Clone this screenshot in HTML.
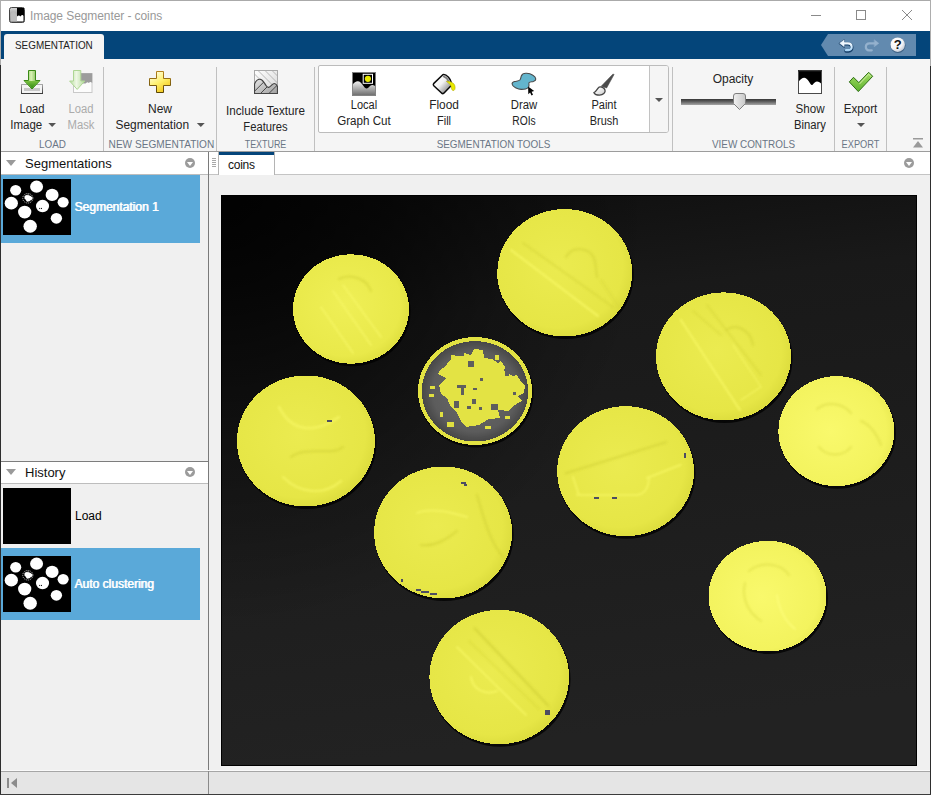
<!DOCTYPE html>
<html lang="en">
<head>
<meta charset="utf-8">
<title>Image Segmenter - coins</title>
<style>
html,body{margin:0;padding:0;}
body{width:931px;height:795px;overflow:hidden;background:#f0f0f0;position:relative;font-family:"Liberation Sans",sans-serif;font-size:12px;color:#000;}
.abs{position:absolute;}
#win{position:absolute;left:0;top:0;width:931px;height:795px;overflow:hidden;background:#f0f0f0;}
/* title bar */
#title{left:0;top:0;width:931px;height:31px;background:#fff;}
#title .txt{left:30px;top:8px;font-size:12px;line-height:16px;color:#999;white-space:nowrap;letter-spacing:-0.080px;}
/* blue band */
#band{left:0;top:31px;width:931px;height:28px;background:#04457a;}
#tab{left:4px;top:34px;width:100px;height:25px;background:#f5f5f5;border-radius:3px 3px 0 0;}
#tab span{transform:scaleX(0.9);transform-origin:0 50%;position:absolute;left:11px;top:4px;font-size:11px;line-height:14px;color:#222;white-space:nowrap;}
/* toolstrip */
#strip{left:0;top:59px;width:931px;height:92px;background:#f5f5f5;}
.sep{position:absolute;width:1px;background:#c0c0c0;top:67px;height:84px;}
.seclab{transform:scaleX(0.9);position:absolute;top:137px;height:14px;line-height:14px;font-size:11px;color:#6a7685;text-align:center;white-space:nowrap;}
.btxt{transform:scaleX(0.96);position:absolute;text-align:center;font-size:12px;line-height:16px;color:#242424;white-space:nowrap;}
.dis{color:#ababab;}
.dd{display:inline-block;width:0;height:0;border-left:4px solid transparent;border-right:4px solid transparent;border-top:4px solid #555;vertical-align:middle;margin-left:6px;position:relative;top:-1px;}
/* panels */
.hline{position:absolute;height:1px;}
.vline{position:absolute;width:1px;}
.phead{position:absolute;background:#fff;}
.ptitle{position:absolute;font-size:13px;line-height:16px;color:#111;white-space:nowrap;}
.tri{position:absolute;width:0;height:0;border-left:5px solid transparent;border-right:5px solid transparent;border-top:6px solid #9a9a9a;}
.circ{position:absolute;width:10px;height:10px;border-radius:50%;background:#9b9b9b;}
.circ:after{content:"";position:absolute;left:2px;top:3.500px;width:0;height:0;border-left:3px solid transparent;border-right:3px solid transparent;border-top:4.500px solid #fff;}
.sel{position:absolute;background:#5aa9d9;}
.thumb{position:absolute;width:68px;height:56px;background:#000;overflow:hidden;}
.ilab{position:absolute;font-size:12px;line-height:16px;white-space:nowrap;}
.ilab.b{color:#fff;font-weight:normal;text-shadow:0.8px 0 0 #fff;}
</style>
</head>
<body>
<div id="win">
  <!-- title bar -->
  <div id="title" class="abs">
    <svg class="abs" style="left:9px;top:7px" width="16" height="16" viewBox="0 0 16 16">
      <defs><linearGradient id="ig" x1="0" y1="0" x2="0" y2="1"><stop offset="0" stop-color="#d8d8d8"/><stop offset="1" stop-color="#6e6e6e"/></linearGradient></defs>
      <rect x="0.5" y="0.5" width="15" height="15" rx="2" fill="url(#ig)" stroke="#444"/>
      <rect x="8" y="1" width="7" height="14" fill="#000"/>
      <path d="M1.5 14.5 V8 C2 5.5 3.5 4.5 5 5 C6.5 5.5 7.5 7 8 8.5 V14.5 Z" fill="#bdbdbd"/>
      <path d="M8 14.5 V9.5 C9 8 10.5 8 11.5 9.5 C12.5 7.5 14 7.5 14.5 9 V14.5 Z" fill="#fff"/>
    </svg>
    <div class="abs txt">Image Segmenter - coins</div>
    <div class="abs" style="left:811px;top:15px;width:10px;height:1px;background:#8a8a8a"></div>
    <div class="abs" style="left:856px;top:10px;width:8px;height:8px;border:1px solid #8a8a8a"></div>
    <svg class="abs" style="left:901px;top:9px" width="12" height="12" viewBox="0 0 12 12"><path d="M1 1 L11 11 M11 1 L1 11" stroke="#8a8a8a" stroke-width="1" fill="none"/></svg>
  </div>
  <!-- blue band -->
  <div id="band" class="abs"></div>
  <div id="tab" class="abs"><span>SEGMENTATION</span></div>
  <!-- toolstrip body -->
  <div id="strip" class="abs"></div>
  <!-- ===== TOOLSTRIP CONTENT ===== -->
  <div class="sep" style="left:103px"></div>
  <div class="sep" style="left:216px"></div>
  <div class="sep" style="left:314px"></div>
  <div class="sep" style="left:672px"></div>
  <div class="sep" style="left:834px"></div>
  <div class="sep" style="left:886px"></div>
  <div class="seclab" style="left:2px;width:101px">LOAD</div>
  <div class="seclab" style="left:104px;width:112px;transform:scaleX(0.918)">NEW SEGMENTATION</div>
  <div class="seclab" style="left:217px;width:97px;transform:scaleX(0.81)">TEXTURE</div>
  <div class="seclab" style="left:315px;width:357px">SEGMENTATION TOOLS</div>
  <div class="seclab" style="left:673px;width:161px">VIEW CONTROLS</div>
  <div class="seclab" style="left:835px;width:51px;transform:scaleX(0.84)">EXPORT</div>

  <!-- Load Image -->
  <svg class="abs" style="left:20px;top:69px" width="24" height="26" viewBox="0 0 24 26">
    <defs>
      <linearGradient id="ga" x1="0" y1="0" x2="1" y2="0"><stop offset="0" stop-color="#5fae2e"/><stop offset="0.45" stop-color="#d9f2b4"/><stop offset="1" stop-color="#4c9a1f"/></linearGradient>
      <linearGradient id="gtr" x1="0" y1="0" x2="0" y2="1"><stop offset="0" stop-color="#a8a8a8"/><stop offset="1" stop-color="#3c3c3c"/></linearGradient><linearGradient id="gh" x1="0" y1="0" x2="0" y2="1"><stop offset="0" stop-color="#7cc242"/><stop offset="1" stop-color="#2f8a10"/></linearGradient>
    </defs>
    <rect x="1.5" y="15.5" width="21" height="9" fill="#f4f4f4" stroke="url(#gtr)"/>
    <rect x="4" y="19" width="16" height="3" fill="#c8c8c8"/>
    <path d="M8.5 1.5 H15.500 V11.5 H20 L12 20 L4 11.5 H8.500 Z" fill="url(#ga)" stroke="#3a8a16" stroke-width="1"/>
    <path d="M4.800 12 H19.2 L12 19.400 Z" fill="url(#gh)"/>
  </svg>
  <div class="btxt" style="left:2px;width:60px;top:101px;transform:scaleX(0.936)">Load</div>
  <div class="btxt" style="left:4px;width:58px;top:117px;transform:scaleX(0.958)">Image<span class="dd"></span></div>

  <!-- Load Mask (disabled) -->
  <svg class="abs" style="left:68px;top:69px" width="26" height="26" viewBox="0 0 26 26">
    <defs><linearGradient id="gad" x1="0" y1="0" x2="1" y2="0"><stop offset="0" stop-color="#b9dea0"/><stop offset="0.45" stop-color="#eef8e4"/><stop offset="1" stop-color="#b3d99a"/></linearGradient></defs>
    <rect x="5.500" y="4.500" width="18.500" height="19" fill="#fcfcfc" stroke="#c9c9c9"/>
    <path d="M12 4.200 H24.200 V14 C23 12.500 21.800 12.800 20.800 14 C19.800 12.600 18.600 13 17.600 14.600 L12 14.600 Z" fill="#9c9c9c"/>
    <path d="M5.500 1.500 H12.800 V12 H16.800 L9.200 20.400 L1.600 12 H5.500 Z" fill="url(#gad)" stroke="#aed694" stroke-width="1" stroke-linejoin="round"/>
  </svg>
  <div class="btxt dis" style="left:56px;width:50px;top:101px;transform:scaleX(0.936)">Load</div>
  <div class="btxt dis" style="left:56px;width:50px;top:117px;transform:scaleX(0.94)">Mask</div>

  <!-- New Segmentation -->
  <svg class="abs" style="left:148px;top:70px" width="24" height="24" viewBox="0 0 24 24">
    <defs><linearGradient id="gp" x1="0.2" y1="0" x2="0.8" y2="1"><stop offset="0" stop-color="#ffffe8"/><stop offset="0.5" stop-color="#fff06a"/><stop offset="1" stop-color="#f0c010"/></linearGradient><linearGradient id="gps" x1="0" y1="0" x2="0" y2="1"><stop offset="0" stop-color="#b5831e"/><stop offset="1" stop-color="#5a4606"/></linearGradient></defs>
    <path d="M8.500 1.500 H15.500 V8.500 H22.500 V15.500 H15.500 V22.500 H8.500 V15.500 H1.500 V8.500 H8.500 Z" fill="url(#gp)" stroke="url(#gps)" stroke-width="1" stroke-linejoin="round"/>
  </svg>
  <div class="btxt" style="left:110px;width:100px;top:101px;transform:scaleX(1.0)">New</div>
  <div class="btxt" style="left:110px;width:100px;top:117px;transform:scaleX(0.995)">Segmentation<span class="dd" style="margin-left:7.5px"></span></div>

  <!-- Include Texture Features -->
  <svg class="abs" style="left:254px;top:70px" width="24" height="24" viewBox="0 0 24 24">
    <defs>
      <linearGradient id="tsky" x1="0" y1="0" x2="1" y2="1"><stop offset="0" stop-color="#ffffff"/><stop offset="1" stop-color="#d6d6d6"/></linearGradient>
      <linearGradient id="tmt" x1="0" y1="0" x2="1" y2="1"><stop offset="0" stop-color="#e4e4e4"/><stop offset="1" stop-color="#9f9f9f"/></linearGradient>
      <clipPath id="tbox"><rect x="0.5" y="0.5" width="23" height="23"/></clipPath>
      <clipPath id="tmc"><path d="M0.5 23.5 V14 C2 10.500 4.500 9 6.500 9.300 C9 9.700 10.500 13.500 12 15.500 C13 17 14 17.600 15 17.200 C17 16.300 18.500 13.500 20.300 13.500 C21.800 13.500 22.800 14.800 23.500 16.500 V23.500 Z"/></clipPath>
    </defs>
    <rect x="0.5" y="0.5" width="23" height="23" fill="url(#tsky)"/>
    <g clip-path="url(#tbox)" stroke="#a8a8a8" stroke-width="0.8">
      <path d="M-4 -0.500 L20 23.500 M3.500 0 L27.500 24 M10.500 0 L34.500 24 M17.500 0 L41.500 24"/>
    </g>
    <path d="M0.500 23.500 V14 C2 10.500 4.500 9 6.500 9.300 C9 9.700 10.500 13.500 12 15.500 C13 17 14 17.600 15 17.200 C17 16.300 18.500 13.500 20.300 13.500 C21.800 13.500 22.800 14.800 23.500 16.500 V23.500 Z" fill="url(#tmt)"/>
    <g clip-path="url(#tmc)" stroke="#4a4a4a" stroke-width="1">
      <path d="M-2 23.800 L13.800 8 M6 24 L22 8 M14 24.400 L30 8.400"/>
    </g>
    <rect x="0.5" y="0.5" width="23" height="23" fill="none" stroke="#a9a9a9"/>
    <path d="M0.500 23.500 V14 C2 10.500 4.500 9 6.500 9.300 C9 9.700 10.500 13.500 12 15.500 C13 17 14 17.600 15 17.200 C17 16.300 18.500 13.500 20.300 13.500 C21.800 13.500 22.800 14.800 23.500 16.500 V23.500 Z" fill="none" stroke="#454545" stroke-width="1.200" stroke-linejoin="round"/>
  </svg>
  <div class="btxt" style="left:217px;width:97px;top:103px;transform:scaleX(0.973)">Include Texture</div>
  <div class="btxt" style="left:217px;width:97px;top:119px;transform:scaleX(0.935)">Features</div>

  <!-- Gallery -->
  <div class="abs" style="left:318px;top:65px;width:349px;height:66px;background:#fff;border:1px solid #bcbcbc;border-radius:2px 3px 3px 2px"></div>
  <div class="abs" style="left:649px;top:66px;width:18px;height:66px;background:#f5f5f5;border-left:1px solid #c2c2c2;border-radius:0 2px 2px 0"></div>
  <div class="abs" style="left:655px;top:98px;width:0;height:0;border-left:4px solid transparent;border-right:4px solid transparent;border-top:4px solid #555"></div>

  <!-- Local Graph Cut -->
  <svg class="abs" style="left:352px;top:72px" width="24" height="24" viewBox="0 0 24 24">
    <defs><linearGradient id="gg" x1="0" y1="0" x2="0" y2="1"><stop offset="0" stop-color="#f0f0f0"/><stop offset="1" stop-color="#6c6c6c"/></linearGradient></defs>
    <rect x="0" y="0" width="24" height="24" fill="#000"/>
    <path d="M0.500 23.500 V13 C2 10.500 4 9.200 6 9.300 C8.500 9.500 10 12 11.500 14 C12.500 15.500 13.500 16.500 14.700 16.400 C16.500 16.200 18 13 20 12.900 C21.500 12.900 22.500 13.500 23.500 14.200 V23.500 Z" fill="url(#gg)"/>
    <rect x="11.200" y="2.300" width="9.300" height="9" fill="#000" stroke="#fff" stroke-width="1"/>
    <circle cx="15.900" cy="6.800" r="3.100" fill="#e8e800"/>
    <rect x="0.5" y="0.5" width="23" height="23" fill="none" stroke="#8c8c8c" stroke-opacity="0.9"/>
  </svg>
  <div class="btxt" style="left:324px;width:80px;top:97px;transform:scaleX(0.916)">Local</div>
  <div class="btxt" style="left:324px;width:80px;top:113px;transform:scaleX(0.968)">Graph Cut</div>

  <!-- Flood Fill -->
  <svg class="abs" style="left:431px;top:72px" width="26" height="24" viewBox="0 0 26 24">
    <defs><linearGradient id="gb" x1="0.1" y1="0.2" x2="0.800" y2="0.900"><stop offset="0" stop-color="#ffffff"/><stop offset="0.45" stop-color="#f2f2f2"/><stop offset="1" stop-color="#8a8a8a"/></linearGradient></defs>
    <path d="M11.800 2.700 L2.600 11.600 Q1.900 12.600 2.800 13.700 L10.800 21.300 Q11.800 22 12.800 21.200 L19.800 14 C21 12 20 8 17.500 5.200 C15.500 3.200 13 2.300 11.800 2.700 Z" fill="url(#gb)" stroke="#0a0a0a" stroke-width="1.500" stroke-linejoin="round"/>
    <path d="M12.600 4.600 C14.600 5.200 17 7.600 17.800 9.800" fill="none" stroke="#7c7c7c" stroke-width="1.600" stroke-linecap="round"/>
    <path d="M15.300 9.300 C18.500 9.100 22.500 10.400 23.600 13 C24.400 15 24.400 17.600 23 18.400 C21.800 19 20.600 18 20.400 16 C20.200 13.500 18.500 11.500 15.300 9.300 Z" fill="#e9e900" stroke="#a8a000" stroke-width="0.500"/>
  </svg>
  <div class="btxt" style="left:404px;width:80px;top:97px;transform:scaleX(0.99)">Flood</div>
  <div class="btxt" style="left:404px;width:80px;top:113px;transform:scaleX(0.92)">Fill</div>

  <!-- Draw ROIs -->
  <svg class="abs" style="left:511px;top:72px" width="28" height="26" viewBox="0 0 28 26">
    <path d="M15.600 1.200 C12.500 1 10.800 2.500 10.300 4 C9.800 5.500 9.800 7 8.900 8 C7.800 9.300 5.500 9 3.600 9.500 C2 10 1 11 1.100 12 C1.300 13.800 3 15 4.500 15.700 C6.300 16.600 8.300 17.400 10.300 17.400 C13 17.400 16 16.800 17.100 15.700 C18 14.800 18 13.800 18 13.300 C18 12.400 17.600 11.400 18 10.700 C18.800 9.600 21 9.900 22.400 9.500 C24 9 24.900 8.200 24.800 7 C24.700 5.400 23.500 4.100 21.900 3.200 C20 2 17.500 1.300 15.600 1.200 Z" fill="#63b5cd" stroke="#4a4a4a" stroke-width="1.100"/>
    <path d="M17.100 14.500 L17.300 22.300 L19.100 20.500 L20.500 23.500 L22 22.800 L20.600 19.800 L23.200 18.900 Z" fill="#050505"/>
  </svg>
  <div class="btxt" style="left:484px;width:80px;top:97px;transform:scaleX(0.943)">Draw</div>
  <div class="btxt" style="left:484px;width:80px;top:113px;transform:scaleX(0.857)">ROIs</div>

  <!-- Paint Brush -->
  <svg class="abs" style="left:592px;top:72px" width="24" height="24" viewBox="0 0 24 24">
    <defs><linearGradient id="gpb" x1="0.2" y1="0.2" x2="0.900" y2="0.900"><stop offset="0" stop-color="#ffffff"/><stop offset="1" stop-color="#cfcfcf"/></linearGradient></defs>
    <path d="M20.800 2.200 Q21.600 1.700 22 2.600 L14.600 16 L9.200 14.300 Z" fill="#4b4b4b" stroke="#4b4b4b" stroke-width="0.600" stroke-linejoin="round"/>
    <path d="M7 15.200 C9 14.400 12.200 15.500 13 18 C13.800 20.600 11 23.200 7.500 23.200 C5 23.200 2.600 22 1.900 20.600 C4 20 5 16.600 7 15.200 Z" fill="url(#gpb)" stroke="#444" stroke-width="1.300" stroke-linejoin="round"/>
  </svg>
  <div class="btxt" style="left:564px;width:80px;top:97px;transform:scaleX(0.92)">Paint</div>
  <div class="btxt" style="left:564px;width:80px;top:113px;transform:scaleX(0.91)">Brush</div>

  <!-- Opacity slider -->
  <div class="btxt" style="left:693px;width:80px;top:71px;transform:scaleX(1.0)">Opacity</div>
  <div class="abs" style="left:681px;top:99px;width:95px;height:6px;background:linear-gradient(#363636,#5c5c5c 40%,#a6a6a6)"></div>
  <svg class="abs" style="left:731px;top:92px" width="16" height="19" viewBox="0 0 16 19">
    <defs><linearGradient id="gs" x1="0" y1="0" x2="1" y2="0"><stop offset="0" stop-color="#f0f0f0"/><stop offset="1" stop-color="#c8c8c8"/></linearGradient></defs>
    <path d="M5 1.500 H12 Q14.500 1.500 14.500 4 V11.500 L8.500 17.500 L2.500 11.500 V4 Q2.500 1.500 5 1.500 Z" fill="url(#gs)" stroke="#7e7e7e" stroke-width="1"/>
  </svg>

  <!-- Show Binary -->
  <svg class="abs" style="left:798px;top:70px" width="24" height="24" viewBox="0 0 24 24">
    <rect x="0.5" y="0.5" width="23" height="23" fill="#000"/>
    <path d="M0.500 23.500 V12 C2 9.500 4.500 7.600 6.300 7.700 C9 7.800 11 11.500 12.500 14 C13.200 15.100 14 15.400 14.600 14.700 C16 13 17.500 11.600 19 11.600 C20.800 11.600 22.300 12.800 23.500 14 V23.500 Z" fill="#fff"/>
    <rect x="0.5" y="0.5" width="23" height="23" fill="none" stroke="#4a4a4a"/>
    <rect x="0.5" y="0.5" width="23" height="1" fill="none" stroke="#222" stroke-width="0.5"/>
  </svg>
  <div class="btxt" style="left:780px;width:60px;top:101px;transform:scaleX(0.97)">Show</div>
  <div class="btxt" style="left:780px;width:60px;top:117px;transform:scaleX(0.94)">Binary</div>

  <!-- Export -->
  <svg class="abs" style="left:848px;top:70px" width="26" height="24" viewBox="0 0 26 24">
    <defs><linearGradient id="gc" x1="0" y1="0" x2="0" y2="1"><stop offset="0" stop-color="#a4dc66"/><stop offset="1" stop-color="#5db32e"/></linearGradient></defs>
    <path d="M1.300 11.900 L5.500 7.300 L10.800 12.600 L20.700 2.300 L24.700 6.300 L10.300 21.600 Z" fill="url(#gc)" stroke="#2c6e14" stroke-width="1" stroke-linejoin="round"/><path d="M11.500 13.800 L20.700 4.200 L22.800 6.300" fill="none" stroke="#c9ec9a" stroke-width="1.200" opacity="0.8"/>
  </svg>
  <div class="btxt" style="left:835px;width:51px;top:101px;transform:scaleX(0.965)">Export</div>
  <div class="abs" style="left:857px;top:123px;width:0;height:0;border-left:4px solid transparent;border-right:4px solid transparent;border-top:4px solid #555"></div>

  <!-- collapse icon -->
  <svg class="abs" style="left:912px;top:137px" width="12" height="12" viewBox="0 0 12 12"><rect x="1" y="1" width="10" height="1.500" fill="#9a9a9a"/><path d="M6 4 L11 10.500 H1 Z" fill="#9a9a9a"/></svg>

  <!-- Quick access bar -->
  <svg class="abs" style="left:820px;top:34px" width="97" height="22" viewBox="0 0 97 22">
    <defs>
      <radialGradient id="gq" cx="0.35" cy="0.3" r="0.8"><stop offset="0" stop-color="#ffffff"/><stop offset="0.6" stop-color="#f4f4f6"/><stop offset="1" stop-color="#b9c3d0"/></radialGradient>
      <linearGradient id="gu" x1="0" y1="0" x2="0" y2="1"><stop offset="0" stop-color="#f4faff"/><stop offset="1" stop-color="#a9d4f5"/></linearGradient>
    </defs>
    <path d="M1 11 L8 0 H96 V22 H8 Z" fill="#628aaf"/>
    <!-- undo -->
    <g fill="none" stroke-linecap="round" stroke-linejoin="round">
      <path d="M22.500 9.800 H28 C33 9.800 33 17 28.500 17 H26" stroke="#163f68" stroke-width="3.400"/>
      <path d="M24.300 5.700 L19.300 9.500 L24.300 13.200 Z" fill="#163f68" stroke="#163f68" stroke-width="1.200"/>
      <path d="M22.500 9.300 H28 C32.800 9.300 32.800 16.200 28.500 16.200 H26" stroke="url(#gu)" stroke-width="2.200"/>
      <path d="M24 6 L19.700 9.300 L24 12.500 Z" fill="#eef7ff" stroke="#eef7ff" stroke-width="0.500"/>
    </g>
    <!-- redo (dim) -->
    <g fill="none" stroke-linecap="round" stroke-linejoin="round" opacity="0.5">
      <path d="M55 9.300 H49.500 C44.700 9.300 44.700 16.300 49 16.300 H51.800" stroke="#c6d8ec" stroke-width="2.200"/>
      <path d="M54.500 6 L58.800 9.300 L54.500 12.500 Z" fill="#c6d8ec" stroke="#c6d8ec" stroke-width="0.500"/>
    </g>
    <!-- help -->
    <circle cx="77.900" cy="11.300" r="7.600" fill="#1f3f60" opacity="0.55"/>
    <circle cx="77.700" cy="10.700" r="7.200" fill="url(#gq)"/>
    <text x="77.700" y="15.300" text-anchor="middle" font-family="Liberation Sans, sans-serif" font-weight="bold" font-size="13" fill="#111">?</text>
  </svg>
  <!-- ===== line under toolstrip ===== -->
  <div class="hline" style="left:0;top:151px;width:931px;background:#9c9c9c"></div>

  <!-- ===== LEFT PANELS ===== -->
  <div class="phead" style="left:1px;top:152px;width:207px;height:22px"></div>
  <div class="hline" style="left:1px;top:174px;width:207px;background:#bdbdbd"></div>
  <div class="tri" style="left:6px;top:160px"></div>
  <div class="ptitle" style="left:25px;top:156px">Segmentations</div>
  <div class="circ" style="left:185px;top:158px"></div>
  <div class="sel" style="left:1px;top:175px;width:199px;height:68px"></div>
  <div class="thumb" style="left:3px;top:179px"><svg width="68" height="56" viewBox="0 0 300 246"><use href="#mask"/></svg></div>
  <div class="ilab b" style="left:74.300px;top:199px">Segmentation 1</div>

  <div class="hline" style="left:1px;top:461px;width:207px;background:#7d7d7d"></div>
  <div class="phead" style="left:1px;top:462px;width:207px;height:21px"></div>
  <div class="hline" style="left:1px;top:483px;width:207px;background:#bdbdbd"></div>
  <div class="tri" style="left:6px;top:469px"></div>
  <div class="ptitle" style="left:25px;top:465px">History</div>
  <div class="circ" style="left:185px;top:467px"></div>
  <div class="thumb" style="left:3px;top:488px"></div>
  <div class="ilab" style="left:75px;top:508px">Load</div>
  <div class="sel" style="left:1px;top:548px;width:199px;height:72px"></div>
  <div class="thumb" style="left:3px;top:556px"><svg width="68" height="56" viewBox="0 0 300 246"><use href="#mask"/></svg></div>
  <div class="ilab b" style="left:74.300px;top:576px">Auto clustering</div>

  <!-- splitter line -->
  <div class="vline" style="left:208px;top:152px;height:642px;background:#7a7a7a"></div>
  <!-- ===== DOCUMENT AREA ===== -->
  <div class="abs" style="left:209px;top:152px;width:721px;height:22px;background:#fff"></div>
  <div class="hline" style="left:209px;top:174px;width:721px;background:#c4c4c4"></div>
  <!-- grip -->
  <div class="abs" style="left:212px;top:158px;width:4px;height:9px;background:repeating-linear-gradient(#a8a8a8 0,#a8a8a8 1px,#fff 1px,#fff 2px)"></div>
  <!-- tab -->
  <div class="abs" style="left:218px;top:152px;width:55px;height:23px;background:#fff;border-left:1px solid #b4b4b4;border-right:1px solid #b4b4b4"></div>
  <div class="abs" style="left:219px;top:152px;width:55px;height:3px;background:#04457a"></div>
  <div class="abs" style="left:228px;top:157px;font-size:12px;line-height:16px;color:#111;letter-spacing:-0.250px">coins</div>
  <div class="circ" style="left:904px;top:158px"></div>

  <!-- coins image -->
  <svg class="abs" style="left:221px;top:195px" width="696" height="571" viewBox="0 0 696 571">
    <defs>
      <linearGradient id="bg" x1="0" y1="0" x2="0.150" y2="1"><stop offset="0" stop-color="#0d0d0d"/><stop offset="0.25" stop-color="#191919"/><stop offset="0.6" stop-color="#1d1d1d"/><stop offset="1" stop-color="#222222"/></linearGradient>
      <radialGradient id="vg" gradientUnits="userSpaceOnUse" cx="0" cy="0" r="430"><stop offset="0" stop-color="#000" stop-opacity="0.9"/><stop offset="0.35" stop-color="#000" stop-opacity="0.62"/><stop offset="0.7" stop-color="#000" stop-opacity="0.25"/><stop offset="1" stop-color="#000" stop-opacity="0"/></radialGradient>
      <radialGradient id="cn" cx="0.45" cy="0.45" r="0.6"><stop offset="0" stop-color="#ebeb50"/><stop offset="0.8" stop-color="#e6e646"/><stop offset="1" stop-color="#d9d93a"/></radialGradient>
      <radialGradient id="cn2" cx="0.45" cy="0.45" r="0.6"><stop offset="0" stop-color="#efef56"/><stop offset="0.8" stop-color="#e9e94a"/><stop offset="1" stop-color="#dcdc3c"/></radialGradient>
      <radialGradient id="cd" cx="0.45" cy="0.5" r="0.6"><stop offset="0" stop-color="#f9f96c"/><stop offset="0.8" stop-color="#f3f35e"/><stop offset="1" stop-color="#e6e64e"/></radialGradient>
      <radialGradient id="cg" cx="0.5" cy="0.5" r="0.5"><stop offset="0" stop-color="#6c6c6c"/><stop offset="0.8" stop-color="#5c5c5c"/><stop offset="1" stop-color="#474747"/></radialGradient>
      <filter id="bl" x="0" y="0" width="696" height="571" filterUnits="userSpaceOnUse"><feGaussianBlur stdDeviation="0.9"/></filter>
      <clipPath id="cp1"><ellipse cx="343.7" cy="77.8" rx="67.5" ry="63.7"/></clipPath>
      <clipPath id="cp2"><ellipse cx="130" cy="114" rx="58" ry="54.7"/></clipPath>
      <clipPath id="cp4"><ellipse cx="502.5" cy="161.4" rx="67.5" ry="64"/></clipPath>
      <clipPath id="cp5"><ellipse cx="84.9" cy="246" rx="69" ry="65.5"/></clipPath>
      <clipPath id="cp6"><ellipse cx="615.4" cy="236.2" rx="58" ry="55"/></clipPath>
      <clipPath id="cp7"><ellipse cx="404.6" cy="276.2" rx="68.4" ry="65"/></clipPath>
      <clipPath id="cp8"><ellipse cx="222.1" cy="337.5" rx="69" ry="66"/></clipPath>
      <clipPath id="cp9"><ellipse cx="546.5" cy="401.1" rx="59" ry="55.4"/></clipPath>
      <clipPath id="cp10"><ellipse cx="278.2" cy="482" rx="69.8" ry="67.2"/></clipPath>
    </defs>
    <rect width="696" height="571" fill="url(#bg)"/>
    <rect width="696" height="571" fill="url(#vg)"/>
    <g fill="#000" opacity="0.75">
      <ellipse cx="344.7" cy="80" rx="68" ry="64"/>
      <ellipse cx="131" cy="116.2" rx="58.5" ry="55"/>
      <ellipse cx="503.5" cy="163.6" rx="68" ry="64.3"/>
      <ellipse cx="85.9" cy="248.2" rx="69.5" ry="65.8"/>
      <ellipse cx="616.4" cy="238.4" rx="58.5" ry="55.3"/>
      <ellipse cx="405.6" cy="278.4" rx="68.9" ry="65.3"/>
      <ellipse cx="223.1" cy="339.7" rx="69.5" ry="66.3"/>
      <ellipse cx="547.5" cy="403.3" rx="59.5" ry="55.7"/>
      <ellipse cx="279.2" cy="484.2" rx="70.3" ry="67.5"/>
      <ellipse cx="255" cy="198.2" rx="57.5" ry="54.3"/>
    </g>
    <g shape-rendering="crispEdges">
      <ellipse cx="343.7" cy="77.8" rx="67.5" ry="63.7" fill="url(#cn)"/>
      <ellipse cx="130" cy="114" rx="58" ry="54.7" fill="url(#cn2)"/>
      <ellipse cx="502.5" cy="161.4" rx="67.5" ry="64" fill="url(#cn)"/>
      <ellipse cx="84.9" cy="246" rx="69" ry="65.5" fill="url(#cn)"/>
      <ellipse cx="615.4" cy="236.2" rx="58" ry="55" fill="url(#cd)"/>
      <ellipse cx="404.6" cy="276.2" rx="68.4" ry="65" fill="url(#cn)"/>
      <ellipse cx="222.1" cy="337.5" rx="69" ry="66" fill="url(#cn)"/>
      <ellipse cx="546.5" cy="401.1" rx="59" ry="55.4" fill="url(#cd)"/>
      <ellipse cx="278.2" cy="482" rx="69.8" ry="67.2" fill="url(#cn)"/>
    </g>
    <g fill="none" stroke-linecap="round" filter="url(#bl)" opacity="0.75">
      <g clip-path="url(#cp1)"><path d="M290 55 L377 121" stroke="#f7f764" stroke-width="2.200"/><path d="M302 48 L392 112" stroke="#d2d238" stroke-width="1.600" opacity="0.7"/><path d="M345 62 C352 50 370 52 374 66 L376 82" stroke="#d2d238" stroke-width="2" opacity="0.8"/><path d="M380 85 L398 112" stroke="#d2d238" stroke-width="1.500" opacity="0.6"/></g>
      <g clip-path="url(#cp4)"><path d="M459.600 124.600 L519 215.200" stroke="#f7f764" stroke-width="2.200"/><path d="M472 116 L500 140 M486 110 L540 180" stroke="#d2d238" stroke-width="1.600" opacity="0.7"/><path d="M505 135 C515 128 530 135 532 150" stroke="#d2d238" stroke-width="2" opacity="0.8"/><path d="M520 205 L540 192 L512 150" stroke="#f7f764" stroke-width="1.600" opacity="0.8"/></g>
      <g clip-path="url(#cp7)"><path d="M344.800 278.300 L444.800 247.200" stroke="#d2d238" stroke-width="2.200" opacity="0.85"/><path d="M425.900 283 L459.800 269.800" stroke="#f7f764" stroke-width="2.200"/><path d="M356 300 L415 300 C425 300 428 290 428 282" stroke="#f7f764" stroke-width="2.200" opacity="0.9"/><path d="M352 282 L358 300" stroke="#f7f764" stroke-width="2"/></g>
      <g clip-path="url(#cp10)"><path d="M253.700 433.300 L327.300 510.700" stroke="#d2d238" stroke-width="2.400" opacity="0.9"/><path d="M236 452 L305 520" stroke="#f7f764" stroke-width="2"/><path d="M248 446 L318 514" stroke="#d2d238" stroke-width="1.400" opacity="0.6"/><path d="M250 482 C252 496 266 500 276 496" stroke="#f7f764" stroke-width="2.400"/></g>
      <g clip-path="url(#cp2)" opacity="0.8"><path d="M112 96 L150 150 M122 90 L160 142 M100 112 L132 158" stroke="#fafa6c" stroke-width="2"/><path d="M118 84 C130 78 146 84 150 96" stroke="#d2d238" stroke-width="2"/></g>
      <g clip-path="url(#cp5)" opacity="0.85"><path d="M58 212 C70 236 92 240 118 222" stroke="#f7f764" stroke-width="3"/><path d="M70 262 C86 250 110 262 122 252" stroke="#d2d238" stroke-width="2"/><path d="M62 282 C80 300 104 300 120 286" stroke="#f7f764" stroke-width="2.500"/></g>
      <g clip-path="url(#cp8)" opacity="0.85"><path d="M196 318 C210 312 232 318 246 322" stroke="#f7f764" stroke-width="2.400"/><path d="M200 350 C214 352 226 344 236 336" stroke="#d2d238" stroke-width="2"/><path d="M256 300 C262 320 268 346 282 362" stroke="#d2d238" stroke-width="2"/></g>
      <g clip-path="url(#cp6)" opacity="0.8"><path d="M596 214 C606 206 622 208 630 218" stroke="#dcdc48" stroke-width="2"/><path d="M640 226 C650 230 656 240 660 250" stroke="#dcdc48" stroke-width="2"/><path d="M598 252 C606 262 622 262 630 252" stroke="#dcdc48" stroke-width="2"/></g>
      <g clip-path="url(#cp9)" opacity="0.8"><path d="M528 376 C540 366 560 368 568 380" stroke="#dede4a" stroke-width="2"/><path d="M524 388 C520 404 528 418 540 426" stroke="#dede4a" stroke-width="2"/><path d="M556 400 C558 414 564 426 574 434" stroke="#ffff80" stroke-width="2"/></g>
    </g>
    <g fill="#4c4c62" shape-rendering="crispEdges">
      <rect x="106" y="225" width="5" height="2"/>
      <rect x="373" y="302" width="5" height="2"/>
      <rect x="391" y="302" width="5" height="2"/>
      <rect x="463" y="258" width="2" height="5"/>
      <rect x="240" y="287" width="5" height="2"/>
      <rect x="243" y="289" width="3" height="2"/>
      <rect x="195" y="394" width="5" height="2"/>
      <rect x="200" y="396" width="8" height="2"/>
      <rect x="209" y="398" width="7" height="2"/>
      <rect x="180" y="384" width="2" height="3"/>
      <rect x="324" y="515" width="5" height="5"/>
    </g>
    <g shape-rendering="crispEdges">
      <ellipse cx="254" cy="196" rx="57" ry="54" fill="#e2e242"/>
      <ellipse cx="254" cy="196.300" rx="53.200" ry="50.200" fill="url(#cg)"/>
      <ellipse cx="254" cy="196" rx="50" ry="47" fill="none" stroke="#4e4e4e" stroke-width="2" opacity="0.6"/>
      <path d="M235 161 L243 161 L243 158 L250 160 L253 154 L262 155 L263 163 L271 164 L277 168 L280 166 L284 172 L283 176 L292 181 L296 180 L300 187 L304 190 L303 198 L297 201 L301 206 L292 211 L288 216 L277 215 L279 223 L268 224 L258 230 L245 232 L240 226 L236 218 L229 210 L226 203 L220 199 L218 190 L222 186 L225 183 L217 179 L219 175 L225 171 L228 166 Z" fill="#e3e344"/>
      <g fill="#5e5e5e">
        <rect x="247" y="166" width="6" height="6"/><rect x="236" y="190" width="9" height="3"/><rect x="240" y="193" width="3" height="7"/><rect x="233" y="206" width="5" height="7"/>
        <rect x="251" y="204" width="4" height="5"/><rect x="259" y="183" width="3" height="3"/><rect x="252" y="193" width="4" height="2"/><rect x="270" y="209" width="7" height="6"/>
        <rect x="284" y="176" width="4" height="5"/><rect x="246" y="211" width="4" height="3"/><rect x="258" y="212" width="3" height="3"/><rect x="292" y="197" width="3" height="3"/>
      </g>
      <g fill="#e0e040">
        <rect x="209" y="191" width="5" height="3"/><rect x="208" y="199" width="5" height="3"/><rect x="219" y="217" width="3" height="5"/><rect x="226" y="227" width="7" height="5"/>
        <rect x="264" y="231" width="6" height="3"/><rect x="284" y="221" width="5" height="3"/><rect x="274" y="160" width="4" height="5"/><rect x="230" y="160" width="4" height="4"/>
      </g>
    </g>
    <rect x="0.5" y="0.5" width="695" height="570" fill="none" stroke="#000"/>
  </svg>

  <!-- ===== STATUS BAR ===== -->
  <div class="hline" style="left:1px;top:770px;width:929px;background:#fafafa"></div>
  <div class="hline" style="left:1px;top:771px;width:929px;background:#a6a6a6"></div>
  <div class="abs" style="left:1px;top:772px;width:929px;height:22px;background:#e5e5e5"></div>
  <div class="abs" style="left:7px;top:778px;width:2px;height:10px;background:#8c8c8c"></div>
  <div class="abs" style="left:11px;top:778px;width:0;height:0;border-top:5px solid transparent;border-bottom:5px solid transparent;border-right:6px solid #8c8c8c"></div>
  <div class="vline" style="left:208px;top:771px;height:23px;background:#8a8a8a"></div>

  <!-- mask symbol for thumbnails -->
  <svg width="0" height="0" style="position:absolute">
    <defs>
      <g id="mask" fill="#fff">
        <ellipse cx="148.100" cy="33.500" rx="28.600" ry="27"/>
        <ellipse cx="56" cy="49.100" rx="24.500" ry="23.100"/>
        <ellipse cx="216.600" cy="69.600" rx="28.600" ry="27.100"/>
        <ellipse cx="36.600" cy="106" rx="29.200" ry="27.700"/>
        <ellipse cx="265.300" cy="101.800" rx="24.500" ry="23.300"/>
        <ellipse cx="174.400" cy="119" rx="29" ry="27.500"/>
        <ellipse cx="95.700" cy="145.500" rx="29.200" ry="28"/>
        <ellipse cx="235.600" cy="172.900" rx="25" ry="23.500"/>
        <ellipse cx="119.900" cy="207.800" rx="29.600" ry="28.500"/>
        <rect x="160" y="127" width="4" height="5" fill="#000"/><rect x="168" y="127" width="4" height="5" fill="#000"/><g stroke="#fff" stroke-width="3" fill="none" stroke-dasharray="5 4"><ellipse cx="109.500" cy="84.500" rx="22.500" ry="21"/></g>
        <path d="M101 70 L108 71 L109 68 L113 68 L113 72 L117 72 L122 75 L130 81 L131 85 L128 87 L129 89 L124 93 L120 93 L120 96 L111 99 L106 100 L102 94 L97 87 L94 85 L94 81 L97 79 L93 77 L97 74 Z"/>
      </g>
    </defs>
  </svg>
  <!-- window borders -->
  <div class="abs" style="left:0;top:0;width:931px;height:1px;background:#aaa"></div>
  <div class="abs" style="left:0;top:0;width:1px;height:65px;background:#adadad"></div>
  <div class="abs" style="left:0;top:65px;width:1px;height:730px;background:#2e2e2e"></div>
  <div class="abs" style="left:930px;top:0;width:1px;height:66px;background:#adadad"></div>
  <div class="abs" style="left:930px;top:66px;width:1px;height:729px;background:#2e2e2e"></div>
  <div class="abs" style="left:0;top:794px;width:931px;height:1px;background:#3c3c3c"></div>
</div>
</body>
</html>
